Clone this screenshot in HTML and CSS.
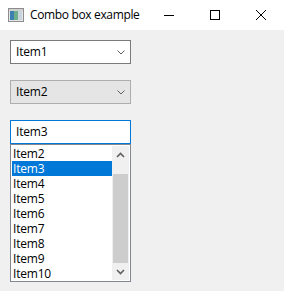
FILE: index.html
```html
<!DOCTYPE html>
<html>
<head>
<meta charset="utf-8">
<link rel="stylesheet" href="styles.css">
</head>
<body>
<div class="window">
  <div class="titlebar">
    <svg class="appicon" width="16" height="16" viewBox="0 0 16 16">
      <rect x="0.5" y="1.5" width="15" height="13" fill="#e8e8e8" stroke="#8c8c8c"/>
      <rect x="2" y="4" width="4" height="9" fill="#3d7fb0"/>
      <rect x="6" y="4" width="4" height="9" fill="#6fae8a"/>
      <rect x="10" y="4" width="4" height="9" fill="#c9d4de"/>
      <rect x="1" y="2" width="14" height="2" fill="#d0d0d0"/>
    </svg>
    <span class="title">Combo box example</span>
    <div class="controls">
      <div class="ctl"><svg width="10" height="10" viewBox="0 0 10 10"><path d="M0 5.5H10" stroke="#000" stroke-width="1"/></svg></div>
      <div class="ctl"><svg width="10" height="10" viewBox="0 0 10 10"><rect x="0.5" y="0.5" width="9" height="9" fill="none" stroke="#000"/></svg></div>
      <div class="ctl"><svg width="10" height="10" viewBox="0 0 10 10"><path d="M0 0L10 10M10 0L0 10" stroke="#000" stroke-width="1"/></svg></div>
    </div>
  </div>
  <div class="content">
    <div class="combo normal">
      <span class="text">Item1</span>
      <svg class="chev" width="8" height="5" viewBox="0 0 8 5"><path d="M0.5 0.5L4 4L7.5 0.5" fill="none" stroke="#606060"/></svg>
    </div>
    <div class="combo flat">
      <span class="text">Item2</span>
      <svg class="chev" width="8" height="5" viewBox="0 0 8 5"><path d="M0.5 0.5L4 4L7.5 0.5" fill="none" stroke="#606060"/></svg>
    </div>
    <div class="dropwrap">
      <div class="combo edit">
        <span class="text">Item3</span>
      </div>
      <div class="popup">
        <ul class="list">
          <li>Item2</li>
          <li class="sel">Item3</li>
          <li>Item4</li>
          <li>Item5</li>
          <li>Item6</li>
          <li>Item7</li>
          <li>Item8</li>
          <li>Item9</li>
          <li>Item10</li>
        </ul>
        <div class="scroll">
          <div class="arrow"><svg width="9" height="6" viewBox="0 0 9 6"><path d="M1 5L4.5 1.5L8 5" fill="none" stroke="#606060" stroke-width="1.6"/></svg></div>
          <div class="track"><div class="thumb"></div></div>
          <div class="arrow"><svg width="9" height="6" viewBox="0 0 9 6"><path d="M1 1L4.5 4.5L8 1" fill="none" stroke="#606060" stroke-width="1.6"/></svg></div>
        </div>
      </div>
    </div>
  </div>
</div>
</body>
</html>
```
FILE: styles.css
```css
html, body {
  margin: 0;
  padding: 0;
}
body {
  width: 284px;
  height: 291px;
  overflow: hidden;
  background: #f0f0f0;
  font-family: "Open Sans", "Noto Sans", sans-serif;
  font-size: 12px;
  letter-spacing: -0.2px;
  color: #000;
}
.window {
  display: flex;
  flex-direction: column;
  height: 291px;
}
.titlebar {
  height: 30px;
  background: #fff;
  display: flex;
  align-items: center;
}
.appicon {
  margin-left: 8px;
  margin-right: 6px;
}
.title {
  flex: 1;
  font-size: 12px;
  line-height: 16px;
  letter-spacing: -0.35px;
}
.controls {
  display: flex;
  height: 30px;
}
.ctl {
  width: 46px;
  height: 30px;
  display: flex;
  align-items: center;
  justify-content: center;
}
.content {
  padding: 10px 0 0 10px;
  display: flex;
  flex-direction: column;
  gap: 16px;
}
.combo {
  box-sizing: border-box;
  width: 121px;
  height: 24px;
  display: flex;
  align-items: center;
  padding-left: 5px;
  padding-right: 5px;
}
.combo .text {
  flex: 1;
  line-height: 16px;
}
.normal {
  background: #fff;
  border: 1px solid #7a7a7a;
}
.flat {
  background: #e5e5e5;
  border: 1px solid #adadad;
}
.edit {
  background: #fff;
  border: 1px solid #0078d7;
}
.chev {
  margin-right: 0;
}
.dropwrap {
  display: flex;
  flex-direction: column;
}
.popup {
  box-sizing: border-box;
  width: 121px;
  height: 138px;
  border: 1px solid #828790;
  background: #fff;
  display: flex;
  padding: 1px;
}
.list {
  list-style: none;
  margin: 0;
  padding: 0;
  flex: 1;
}
.list li {
  height: 15px;
  line-height: 15px;
  padding-left: 1px;
}
.list li.sel {
  background: #0078d7;
  color: #fff;
}
.scroll {
  width: 17px;
  display: flex;
  flex-direction: column;
  background: #f0f0f0;
}
.arrow {
  height: 17px;
  display: flex;
  align-items: center;
  justify-content: center;
}
.track {
  flex: 1;
  display: flex;
  flex-direction: column;
  padding-top: 11px;
}
.thumb {
  margin: 0 1px;
  flex: 1;
  background: #cdcdcd;
}
```
